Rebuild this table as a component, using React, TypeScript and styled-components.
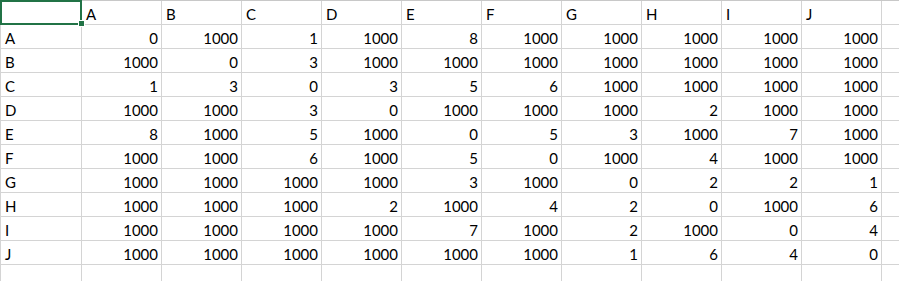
import styled, { createGlobalStyle } from "styled-components";

const GlobalStyle = createGlobalStyle`
  html, body {
    margin: 0;
    padding: 0;
    background: #ffffff;
  }
  body {
    font-family: "Lato", "Open Sans", "Liberation Sans", sans-serif;
    color: #000000;
  }
`;

const labels = ["A", "B", "C", "D", "E", "F", "G", "H", "I", "J"];

const matrix: number[][] = [
  [0, 1000, 1, 1000, 8, 1000, 1000, 1000, 1000, 1000],
  [1000, 0, 3, 1000, 1000, 1000, 1000, 1000, 1000, 1000],
  [1, 3, 0, 3, 5, 6, 1000, 1000, 1000, 1000],
  [1000, 1000, 3, 0, 1000, 1000, 1000, 2, 1000, 1000],
  [8, 1000, 5, 1000, 0, 5, 3, 1000, 7, 1000],
  [1000, 1000, 6, 1000, 5, 0, 1000, 4, 1000, 1000],
  [1000, 1000, 1000, 1000, 3, 1000, 0, 2, 2, 1],
  [1000, 1000, 1000, 2, 1000, 4, 2, 0, 1000, 6],
  [1000, 1000, 1000, 1000, 7, 1000, 2, 1000, 0, 4],
  [1000, 1000, 1000, 1000, 1000, 1000, 1, 6, 4, 0],
];

export default function App() {
  return (
    <>
      <GlobalStyle />
      <Sheet>
        <Grid>
          <Cell />
          {labels.map((l) => (
            <Cell key={l}>{l}</Cell>
          ))}
          <Cell />
          {matrix.map((row, r) => (
            <Row key={labels[r]} label={labels[r]} values={row} />
          ))}
          {Array.from({ length: 12 }).map((_, i) => (
            <Cell key={"e" + i} />
          ))}
        </Grid>
        <Selection>
          <Handle />
        </Selection>
      </Sheet>
    </>
  );
}

const Row = ({ label, values }: { label: string; values: number[] }) => (
  <>
    <Cell>{label}</Cell>
    {values.map((v, i) => (
      <Cell key={i} $num>
        {v}
      </Cell>
    ))}
    <Cell />
  </>
);

const Sheet = styled.div`
  position: relative;
  width: 899px;
  height: 281px;
  overflow: hidden;
`;

const Grid = styled.div`
  display: grid;
  grid-template-columns: 81px repeat(11, 80px);
  grid-auto-rows: 24px;
  border-top: 1px solid #c8c8c8;
  border-left: 1px solid #d4d4d4;
  width: max-content;
`;

const Cell = styled.div<{ $num?: boolean }>`
  box-sizing: border-box;
  border-right: 1px solid #d4d4d4;
  border-bottom: 1px solid #d4d4d4;
  font-size: 15px;
  line-height: 24px;
  padding: 1px ${(p) => (p.$num ? "3px" : "0")} 0 ${(p) => (p.$num ? "0" : "4px")};
  text-align: ${(p) => (p.$num ? "right" : "left")};
  white-space: nowrap;
  overflow: hidden;
`;

const Selection = styled.div`
  position: absolute;
  left: 0;
  top: 0;
  width: 82px;
  height: 25px;
  box-sizing: border-box;
  border: 2px solid #217346;
  pointer-events: none;
`;

const Handle = styled.div`
  position: absolute;
  right: -5px;
  bottom: -4px;
  width: 5px;
  height: 5px;
  background: #217346;
  border: 1px solid #ffffff;
`;
